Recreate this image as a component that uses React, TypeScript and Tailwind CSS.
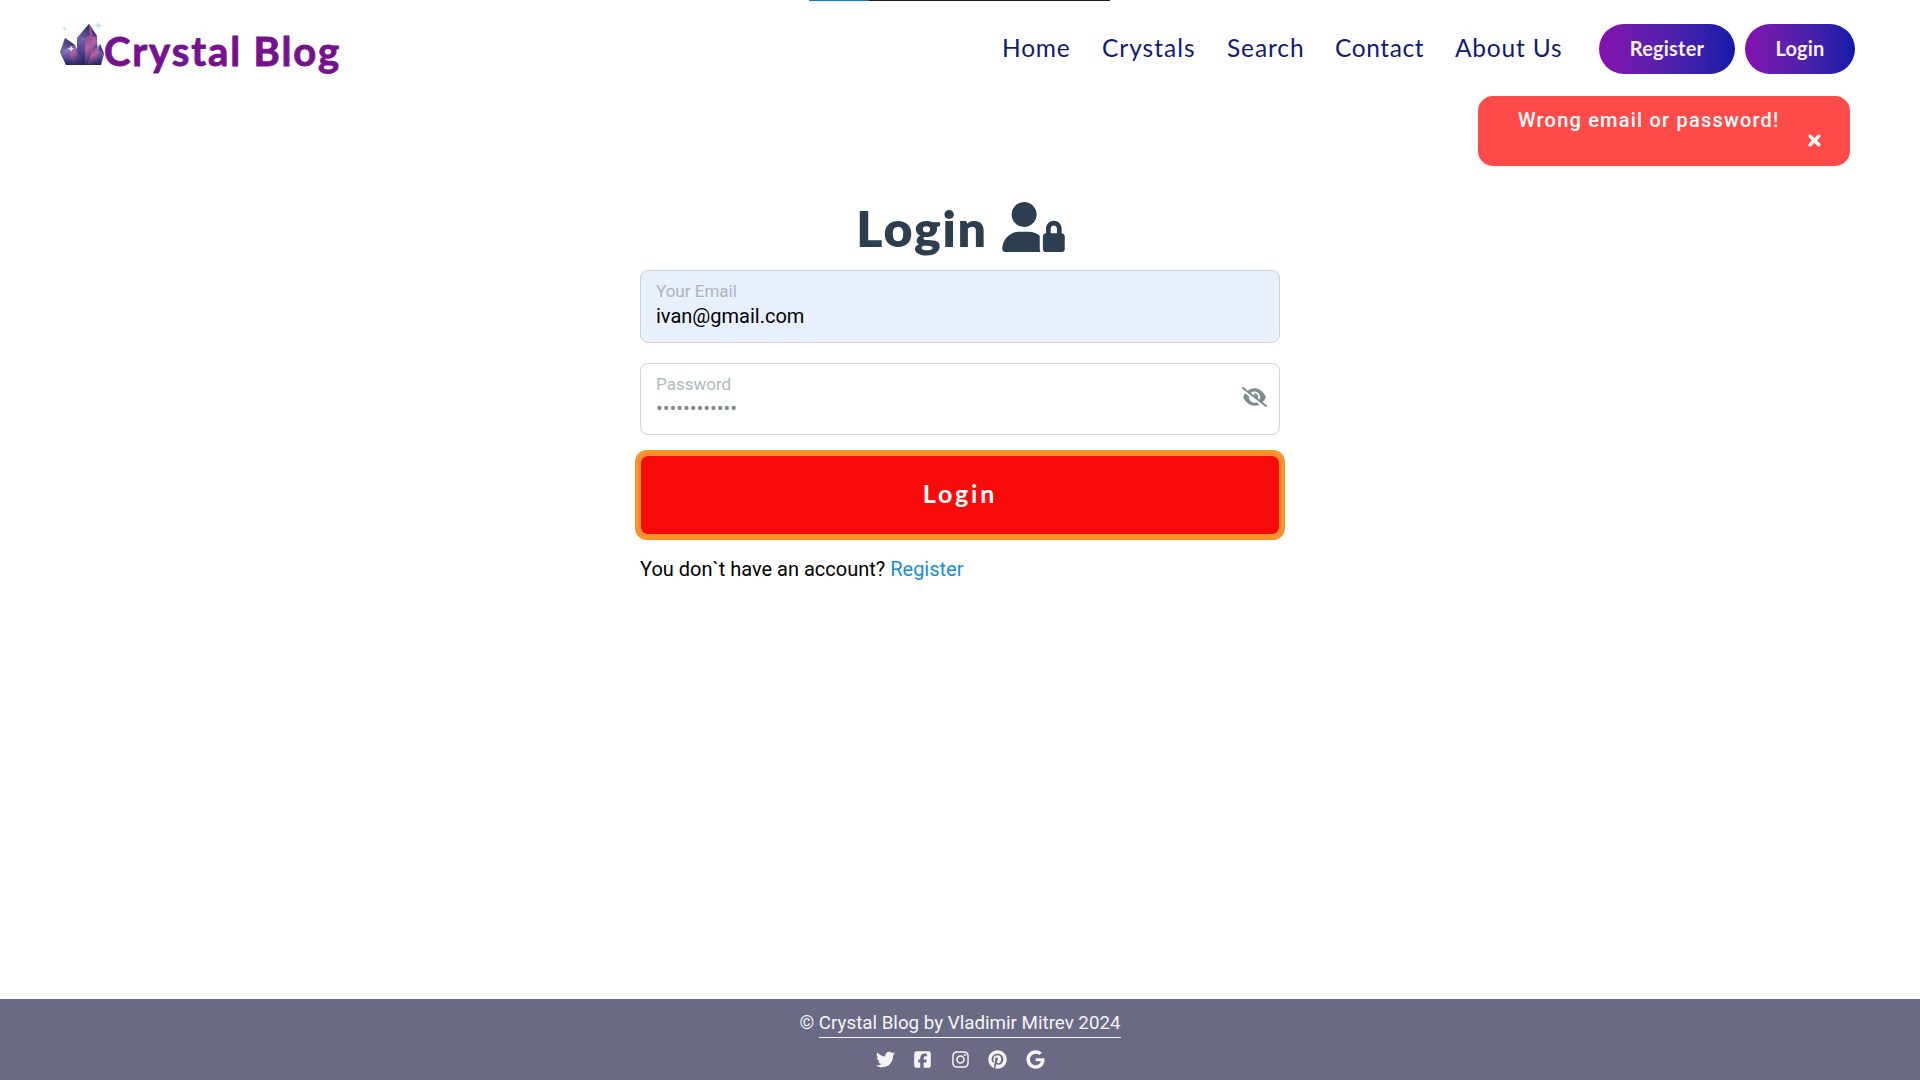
import React from "react";
import { FaUserLock, FaTwitter, FaSquareFacebook, FaInstagram, FaPinterest, FaGoogle, FaXmark, FaEyeSlash } from "react-icons/fa6";

function CrystalLogo() {
  return (
    <svg width="44" height="44" viewBox="0 0 44 44" className="block">
      <defs>
        <linearGradient id="deep" x1="0" y1="0" x2="0" y2="1">
          <stop offset="0" stopColor="#9a8cca" />
          <stop offset="0.5" stopColor="#6350a1" />
          <stop offset="1" stopColor="#1e2161" />
        </linearGradient>
        <linearGradient id="pink" x1="0" y1="0" x2="0.3" y2="1">
          <stop offset="0" stopColor="#8a4599" />
          <stop offset="0.45" stopColor="#b3629f" />
          <stop offset="1" stopColor="#34286f" />
        </linearGradient>
        <linearGradient id="dark" x1="1" y1="0" x2="0" y2="1">
          <stop offset="0" stopColor="#251d5b" />
          <stop offset="1" stopColor="#7e6ab0" />
        </linearGradient>
      </defs>
      <path d="M17 16 29 2 37 14 38 43H17Z" fill="url(#deep)" />
      <path d="M17 16 29 2 30 13 25 16Z" fill="url(#dark)" />
      <path d="M29 2 37 14 34 15 30 13Z" fill="#49357f" />
      <path d="M29 2 33 13 30 13Z" fill="#a65590" />
      <path d="M25 18 30 13 34 14 37 19 28 43H25Z" fill="url(#pink)" />
      <path d="M0 30 5 16 15 23 19 32 25 43H6Z" fill="url(#deep)" />
      <path d="M5 16 15 23 8 25 1 29Z" fill="url(#dark)" />
      <path d="M8 25 15 24 16 28 20 43H12Z" fill="url(#pink)" />
      <path d="M1 30 8 26 13 43H6Z" fill="url(#deep)" />
      <path d="M32 30 40 22 44 32 41 43H25Z" fill="url(#deep)" />
      <path d="M32 30 36 27 40 29 36 43H27Z" fill="url(#pink)" />
      <path d="M40 22 44 32 39 28Z" fill="#443583" />
      <path d="m38.500 0 1.200 2.400 2.800 1.100-2.800 1.100-1.200 2.400-1.200-2.400-2.800-1.100 2.800-1.100ZM4.500 4l.8 1.700 1.700.8-1.700.8L4.500 9l-.8-1.700L2 6.500l1.700-.8Z" fill="#bfe0f8" />
      <path d="m11 23.500 1 2.300 2.400.9-2.400 1L11 30l-1-2.300-2.400-1 2.400-.9Z" fill="#d3edff" />
    </svg>
  );
}

const links = [
  { label: "Home", cls: "w-[67px] tracking-[0.8px] -ml-px mr-px" },
  { label: "Crystals", cls: "w-[93px] tracking-[1px]" },
  { label: "Search", cls: "w-[76px] tracking-[0.9px]" },
  { label: "Contact", cls: "w-[88px] tracking-[0.6px]" },
  { label: "About Us", cls: "w-[107px] tracking-[0.8px]" },
];

export default function App() {
  return (
    <div className="flex h-[1080px] w-[1920px] flex-col overflow-hidden bg-white font-['Roboto',sans-serif] text-black">
      <div className="ml-[809px] flex h-px w-[301px] bg-[#1f1f1f]">
        <div className="w-[60px] bg-[#0078d4]" />
      </div>
      <header className="flex h-[95px] items-start pl-[60px] pr-[65px] font-['Lato',sans-serif]">
        <div className="flex pt-[21px]">
          <CrystalLogo />
          <span className="mt-1 text-[40px] leading-[50px] font-bold tracking-[1.9px] whitespace-nowrap text-[#76128f] [-webkit-text-stroke:0.9px_#76128f]">Crystal Blog</span>
        </div>
        <nav className="ml-auto flex gap-8 pt-[29px] pr-[37px]">
          {links.map((l) => (
            <a key={l.label} className={`${l.cls} text-[24.5px] leading-[36px] whitespace-nowrap text-[#121a78]`}>{l.label}</a>
          ))}
        </nav>
        <div className="flex gap-[10px] pt-[23px] text-[20px] font-bold tracking-[0.2px] text-[#f8f0ff]">
          <button className="h-[50px] w-[136px] rounded-full bg-gradient-to-r from-[#850eae] to-[#0e1aa8] pb-[2px]">Register</button>
          <button className="h-[50px] w-[110px] rounded-full bg-gradient-to-r from-[#850eae] to-[#0e1aa8] pb-[2px]">Login</button>
        </div>
      </header>
      <div className="ml-[1478px] flex h-[70px] w-[372px] shrink-0 rounded-[15px] bg-[#ff4a4a] text-white">
        <span className="ml-10 pt-3 text-xl leading-6 font-medium tracking-[1.200px] whitespace-nowrap">Wrong email or password!</span>
        <FaXmark className="mt-[36px] ml-[26px] size-[17px] stroke-white stroke-[40px]" />
      </div>
      <main className="ml-[640px] flex w-[640px] flex-1 flex-col">
        <h1 className="mt-[32px] flex h-[72px] shrink-0 items-start justify-center gap-[14px] font-['Lato',sans-serif] text-[#2c3e50]">
          <span className="-mt-[2px] ml-px text-[50px] leading-[64px] font-extrabold tracking-[1.700px]">Login</span>
          <FaUserLock className="mt-[4px] h-[50px] w-[63px]" />
        </h1>
        <div className="h-[73px] shrink-0 rounded-lg border border-[#cfd2dc] bg-[#e8effd] px-[15px] pt-[9px]">
          <div className="text-[17px] leading-[22px] text-[#adb5bd]">Your Email</div>
          <div className="mt-px text-[20px] leading-[26px]">ivan@gmail.com</div>
        </div>
        <div className="mt-5 flex h-[72px] shrink-0 justify-between rounded-lg border border-[#d0d3dd] px-[15px] pt-[9px]">
          <div>
            <div className="text-[17px] leading-[22px] text-[#b0b8b9]">Password</div>
            <div className="mt-px text-[20px] leading-[24px] text-[#7f8c8d]">••••••••••••</div>
          </div>
          <FaEyeSlash className="mt-[14px] -mr-[3px] h-[20px] w-[25px] text-[#7f8c8d]" />
        </div>
        <button className="mx-px mt-[21px] h-[78px] shrink-0 rounded-md bg-[#f90b0b] pb-[2px] font-['Lato',sans-serif] text-[25px] font-bold tracking-[2.800px] text-white outline-[6px] outline-[#fc9029]">Login</button>
        <p className="mt-[23px] text-[20px] leading-[24px]">You don`t have an account? <a className="text-[#1290d6]">Register</a></p>
      </main>
      <footer className="flex h-[81px] shrink-0 flex-col items-center bg-[#6b6a85] text-[#f5f5f5]">
        <p className="mt-[12px] h-[27px] text-[18.750px] leading-[24px]">© <a className="inline-block h-[27px] border-b border-[#f5f5f5]">Crystal Blog by Vladimir Mitrev 2024</a></p>
        <div className="mt-[12px] flex gap-[18.500px] text-[19px]">
          <FaTwitter /><FaSquareFacebook /><FaInstagram /><FaPinterest /><FaGoogle />
        </div>
      </footer>
    </div>
  );
}
